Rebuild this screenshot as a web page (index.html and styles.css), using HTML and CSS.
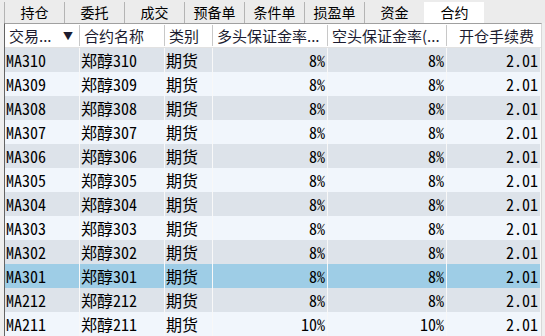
FILE: index.html
```html
<!DOCTYPE html>
<html lang="zh-CN">
<head>
    <meta charset="UTF-8">
    <title>合约</title>
    <link rel="stylesheet" href="styles.css">
</head>
<body>

<div class="tabs">
    <div class="tab">持仓</div>
    <div class="tab">委托</div>
    <div class="tab">成交</div>
    <div class="tab">预备单</div>
    <div class="tab">条件单</div>
    <div class="tab">损盈单</div>
    <div class="tab">资金</div>
    <div class="tab active">合约</div>
</div>

<div class="grid">
    <div class="row head">
        <div class="cell sort"><span>交易...</span><span class="arrow">▼</span></div>
        <div class="cell">合约名称</div>
        <div class="cell">类别</div>
        <div class="cell">多头保证金率...</div>
        <div class="cell">空头保证金率(...</div>
        <div class="cell num">开仓手续费</div>
    </div>
    <div id="rows"></div>
</div>

<script>
    // 合约列表
    let codes = ["310", "309", "308", "307", "306", "305", "304", "303", "302", "301", "212", "211"];
    let rows = document.getElementById("rows");

    codes.forEach((c, i) => {
        let rate = c === "211" ? "10%" : "8%";
        let row = document.createElement("div");
        row.className = "row" + (i % 2 === 0 ? " odd" : "") + (c === "301" ? " selected" : "");
        row.innerHTML =
            `<div class="cell">MA${c}</div>` +
            `<div class="cell">郑醇${c}</div>` +
            `<div class="cell">期货</div>` +
            `<div class="cell num">${rate}</div>` +
            `<div class="cell num">${rate}</div>` +
            `<div class="cell num">2.01</div>`;
        rows.appendChild(row);
    });
</script>

</body>
</html>
```

FILE: styles.css
```css
body {
    margin: 0;
    background-color: #efefef;
    font-family: "Noto Sans Mono CJK SC", "Noto Sans CJK SC", "Liberation Mono", monospace;
    color: #000;
    overflow: hidden;
}
.tabs {
    display: flex;
    height: 23px;
    padding-left: 4px;
    background-color: #ececec;
}
.tab {
    width: 59px;
    margin-top: 2px;
    border-left: 1px solid #b4b4b4;
    font-size: 14px;
    line-height: 21px;
    text-align: center;
}
.tab.active {
    background: white;
    border-left-color: white;
}
.grid {
    width: 536px;
    margin-left: 4px;
    border-left: 1px solid #646464;
    border-top: 1px solid #a0a0a0;
    border-right: 1px solid #d8d8d8;
}
.row {
    display: grid;
    grid-template-columns: 75px 85px 48px 115px 119px 94px;
    height: 24px;
    background: #f1f6fc;
}
.row.odd {
    background: #dde3ea;
}
.row.selected {
    background: #9ecde6;
}
.cell {
    border-right: 1px solid #f8f8f8;
    padding-left: 1px;
    font-size: 16px;
    line-height: 24px;
    white-space: nowrap;
    overflow: hidden;
}
.cell.num {
    text-align: right;
    padding-right: 2px;
    padding-left: 0;
}
.row.head {
    height: 23px;
    background: white;
    align-items: center;
    border-bottom: 1px solid #e2e2e2;
}
.head .cell {
    height: 21px;
    line-height: 21px;
    font-family: "Noto Sans CJK SC", sans-serif;
    font-size: 15px;
    padding-left: 4px;
    color: #1c1c30;
    border-right-color: #c8c8c8;
}
.head .cell.num {
    padding-right: 7px;
    border-right: none;
}
.sort {
    display: flex;
    justify-content: space-between;
    padding-right: 6px;
}
.arrow {
    font-size: 10px;
}
```
